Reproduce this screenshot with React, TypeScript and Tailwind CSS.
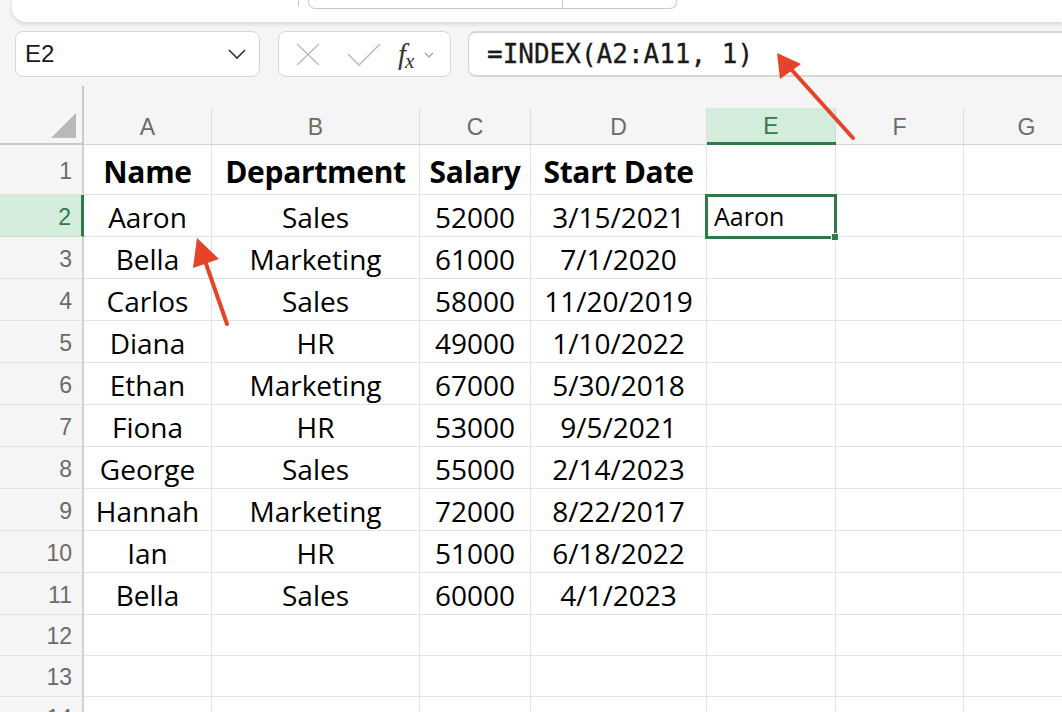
import React from "react";

const colW = [128, 208, 111, 176, 129, 128, 126];
const letters = ["A", "B", "C", "D", "E", "F", "G"];

const data: string[][] = [
  ["Aaron", "Sales", "52000", "3/15/2021"],
  ["Bella", "Marketing", "61000", "7/1/2020"],
  ["Carlos", "Sales", "58000", "11/20/2019"],
  ["Diana", "HR", "49000", "1/10/2022"],
  ["Ethan", "Marketing", "67000", "5/30/2018"],
  ["Fiona", "HR", "53000", "9/5/2021"],
  ["George", "Sales", "55000", "2/14/2023"],
  ["Hannah", "Marketing", "72000", "8/22/2017"],
  ["Ian", "HR", "51000", "6/18/2022"],
  ["Bella", "Sales", "60000", "4/1/2023"],
];

const uiFont = { fontFamily: '"Liberation Sans", Arial, sans-serif' };
const cellFont = { fontFamily: '"Open Sans", "Noto Sans", sans-serif' };

function RowHeader({ n, h, active }: { n: number; h: number; active?: boolean }) {
  return (
    <div
      className={
        "w-[84px] shrink-0 flex items-center justify-end pr-[10px] pt-[3px] text-[23px] border-b " +
        (active
          ? "bg-[#d3ecdb] text-[#2f7a47] border-r-[3px] border-r-[#2f7a47] border-b-[#c5dfcc]"
          : "text-[#6b6b6b] border-r-2 border-r-[#d2d2d2] border-b-[#e0e0e0]")
      }
      style={{ ...uiFont, height: h }}
    >
      {n}
    </div>
  );
}

function Row({ n, h, cells, bold, active }: { n: number; h: number; cells: string[]; bold?: boolean; active?: boolean }) {
  return (
    <div className="flex">
      <RowHeader n={n} h={h} active={active} />
      {colW.map((w, i) => (
        <div
          key={i}
          className={
            "shrink-0 bg-white border-r border-b border-[#e2e2e2] flex items-center text-black pt-[2px] " +
            (i === 4 ? "justify-start pl-[7px] text-[25px] " : "justify-center ") +
            (bold ? "font-bold text-[30px] tracking-[-0.3px] pt-[4px]" : i === 4 ? "" : "text-[28px]")
          }
          style={{ ...cellFont, width: w, height: h }}
        >
          {cells[i] ?? ""}
        </div>
      ))}
    </div>
  );
}

export default function App() {
  return (
    <div className="relative w-[1062px] h-[712px] overflow-hidden bg-[#f5f5f5]">
      {/* top ribbon panel */}
      <div className="ml-[12px] h-[22px] bg-white rounded-bl-[14px] shadow-[0_2px_4px_rgba(0,0,0,0.14)] flex items-start">
        <div className="ml-[286px] w-px h-[6px] bg-[#c8c8c8]" />
        <div className="ml-[9px] w-[369px] h-[9px] border-x border-b border-[#c8c8c8] rounded-b-[7px] flex">
          <div className="w-[254px] h-full border-r border-[#c8c8c8]" />
        </div>
      </div>

      {/* formula bar */}
      <div className="mt-[9px] flex h-[46px]">
        <div className="ml-[15px] w-[245px] bg-white border border-[#d6d6d6] rounded-[8px] flex items-center justify-between pl-[9px] pr-[12px]">
          <span className="text-[24px] text-[#1a1a1a]" style={uiFont}>E2</span>
          <svg width="20" height="12" viewBox="0 0 20 12">
            <path d="M2 2 L10 10 L18 2" fill="none" stroke="#333" strokeWidth="1.6" />
          </svg>
        </div>
        <div className="ml-[18px] w-[173px] bg-white border border-[#d6d6d6] rounded-[8px] flex items-center pl-[17px]">
          <svg width="24" height="23" viewBox="0 0 24 23">
            <path d="M1 1 L23 22 M23 1 L1 22" stroke="#bdbdbd" strokeWidth="1.6" fill="none" />
          </svg>
          <svg className="ml-[27px]" width="34" height="23" viewBox="0 0 34 23">
            <path d="M1 11 L12 22 L33 1" stroke="#bdbdbd" strokeWidth="1.6" fill="none" />
          </svg>
          <span className="ml-[17px] flex items-end text-[#333]" style={{ fontFamily: '"Liberation Serif", serif' }}>
            <span className="italic text-[29px] leading-none">f</span>
            <span className="italic text-[21px] leading-none -ml-[1px] translate-y-[3px]">x</span>
          </span>
          <svg className="ml-[10px] mt-[2px]" width="10" height="7" viewBox="0 0 10 7">
            <path d="M1 1 L5 5 L9 1" stroke="#9a9a9a" strokeWidth="1.2" fill="none" />
          </svg>
        </div>
        <div className="ml-[17px] flex-1 -mr-[12px] bg-white border-y-2 border-l border-[#d6d6d6] rounded-l-[8px] flex items-center pl-[18px]">
          <span className="text-[26px] text-[#1a1a1a] [-webkit-text-stroke:0.3px_#1a1a1a]" style={{ fontFamily: '"DejaVu Sans Mono", monospace' }}>
            =INDEX(A2:A11, 1)
          </span>
        </div>
      </div>

      {/* grid */}
      <div className="mt-[9px]">
        {/* column headers */}
        <div className="flex h-[59px]">
          <div className="relative w-[84px] shrink-0 h-[59px] border-r-2 border-b-2 border-[#c9c9c9]">
            <svg className="absolute left-[51px] top-[27px]" width="25" height="25" viewBox="0 0 25 25">
              <path d="M25 0 L25 25 L0 25 Z" fill="#bababa" />
            </svg>
          </div>
          {colW.map((w, i) => (
            <div
              key={i}
              className={
                "shrink-0 h-[59px] pt-[22px] " +
                (i === 4 ? "border-b-[3px] border-[#2f7a47]" : "border-b border-[#d2d2d2]")
              }
              style={{ width: w }}
            >
              <div
                className={
                  "h-full flex items-center justify-center pt-[3px] text-[23px] border-r " +
                  (i === 4 ? "bg-[#d3ecdb] text-[#2f7a47] border-[#c5dfcc]" : "text-[#6b6b6b] border-[#dedede]")
                }
                style={uiFont}
              >
                {letters[i]}
              </div>
            </div>
          ))}
        </div>

        <Row n={1} h={50} cells={["Name", "Department", "Salary", "Start Date"]} bold />
        {data.map((r, i) => (
          <Row key={i} n={i + 2} h={42} cells={i === 0 ? [...r, "Aaron"] : r} active={i === 0} />
        ))}
        <Row n={12} h={41} cells={[]} />
        <Row n={13} h={41} cells={[]} />
        <Row n={14} h={41} cells={[]} />
      </div>

      {/* selected cell */}
      <div className="absolute left-[705px] top-[194px] w-[132px] h-[45px] border-[3px] border-[#2f7a47] pointer-events-none" />
      <div className="absolute left-[831px] top-[233px] w-[8px] h-[8px] bg-[#2f7a47] border border-white" />

      {/* annotation arrows */}
      <svg className="absolute left-0 top-0 pointer-events-none" width="1062" height="712" viewBox="0 0 1062 712">
        <line x1="227" y1="324" x2="204" y2="258" stroke="#e5432a" strokeWidth="4" strokeLinecap="round" />
        <path d="M197 238 L193 268 L219 259 Z" fill="#e5432a" />
        <line x1="853" y1="138" x2="790" y2="68" stroke="#e5432a" strokeWidth="4" strokeLinecap="round" />
        <path d="M777 53 L780 79 L801 64 Z" fill="#e5432a" />
      </svg>
    </div>
  );
}
